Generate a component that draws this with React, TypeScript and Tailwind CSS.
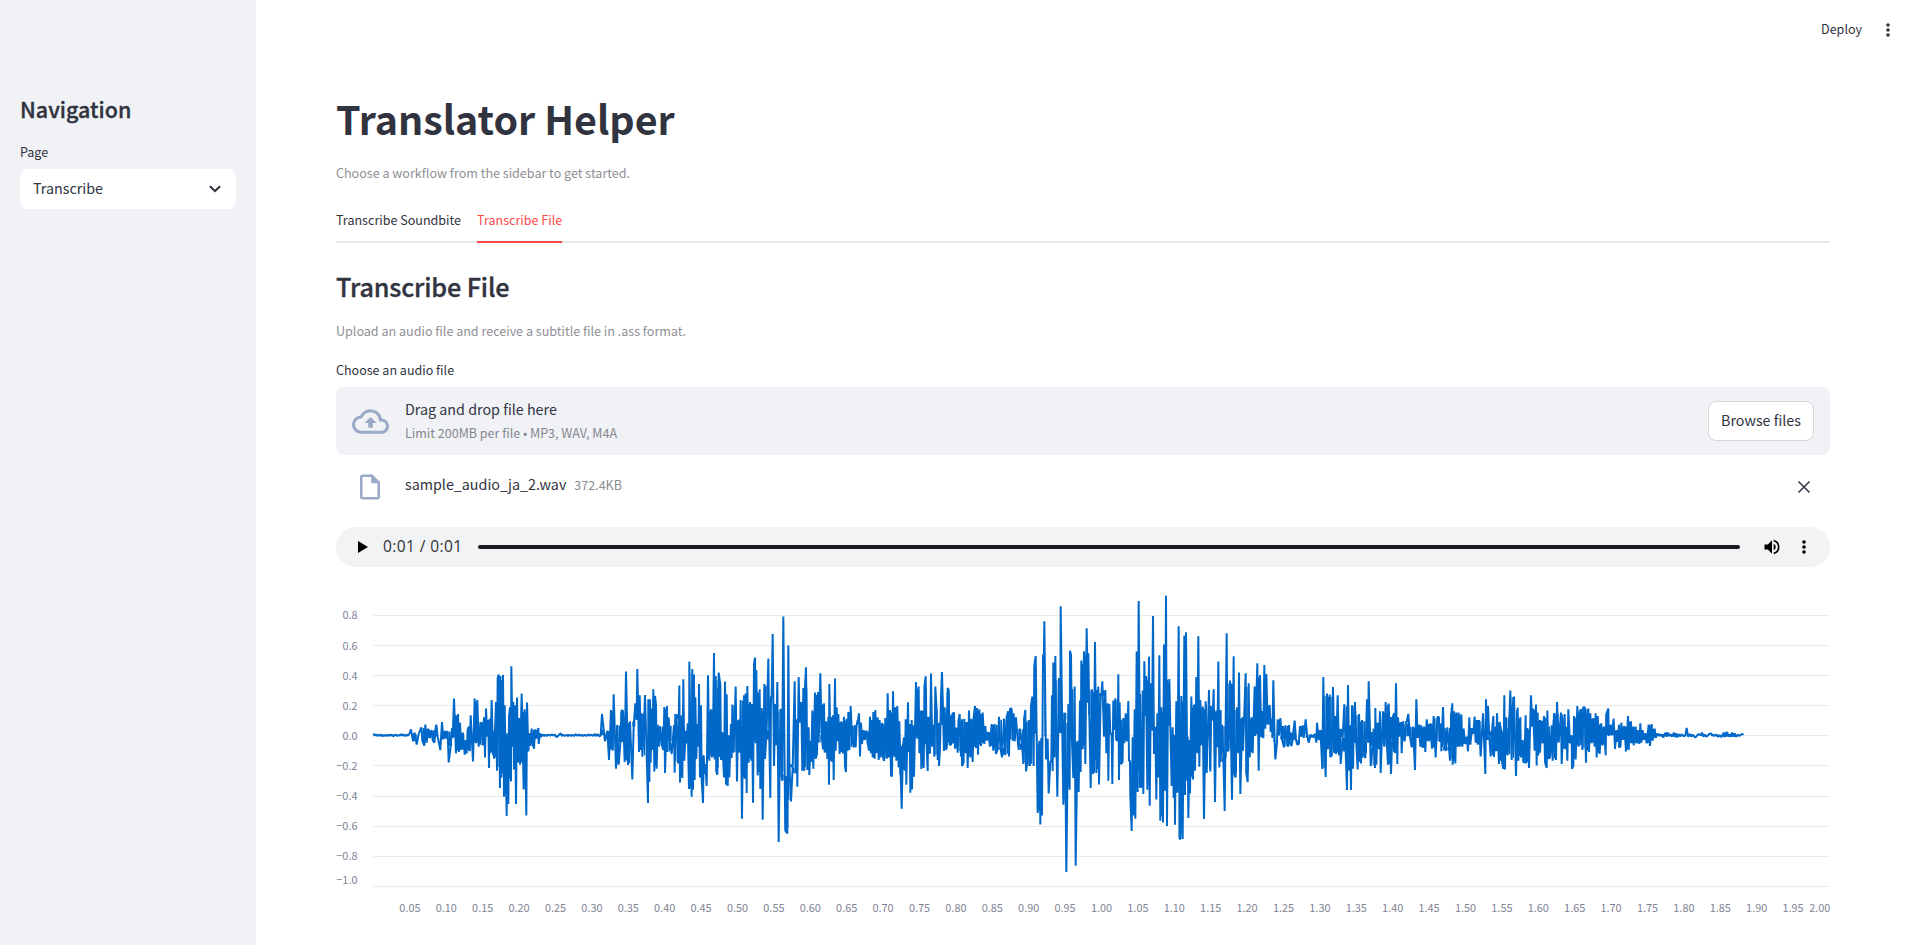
import React from "react";

type Segment = { offset: number; points: string };

// Samples are stored in thirds of a pixel, one list per stretch of the recording.
const segments: Segment[] = [
  {
    offset: -48,
    points:
      "160,461 164,467 168,463 172,468 176,464 180,467 184,464 188,469 192,465 196,468 200,464 204,468 208,464 212,467 216,464 220,469 224,465 228,464 232,468 236,465 240,467 244,462 248,467 252,464 256,468 260,464 264,467 268,462 273,448 279,484 284,458 290,494 296,462 304,442 308,484 313,497 316,434 320,488 325,446 330,474 335,450 339,482 343,488 346,450 349,434 353,470 361,510 366,426 370,478 375,453 380,476 383,453 386,545 392,500 396,444 398,474 402,358 408,520 414,404 417,516 420,428 424,510 429,458 434,524 438,480 440,520 444,446 447,440 449,514 452,406 459,542 464,358 468,490 472,362 476,500 479,450 484,426 488,496 492,412 495,530 498,388 502,470 505,420 507,562 509,416 511,520 515,362 519,526 523,452 522,534 528,368 531,570 533,296 536,286 540,622 541,290 544,590 549,287 552,648 554,378 560,706 562,460 565,670 567,410 570,384 573,602 574,261 578,500 580,368 582,566 585,378 588,670 591,355 594,545 597,414 600,552 605,343 611,626 614,390 619,704 621,370 625,514 629,460 631,498 635,446 638,492 642,506 645,448 649,476 655,444 656,492 660,460 664,470 668,463 672,468 676,464 680,468 684,464 690,467 696,463 700,467 705,464 710,472 716,466 722,460 726,468 730,464 735,468 740,464 744,468 748,464 753,468 757,464 762,468 767,463 772,467 777,463 781,468 785,464 790,468 795,464 800,468 805,463 810,467 815,464 820,468 824,462 829,468 833,462 838,469 842,466 846,404 851,448 855,484 862,452 867,538 873,392 878,512 881,345 888,564 892,434 896,552 901,490 905,392 909,396 914,544 918,277 924,553 930,424 937,596 941,440 946,372 950,420 952,269 957,516 959,348 963,510 965,402 967,528 972,440 975,347 984,667 985,360 988,604 990,360 992,546 995,388 997,510 1000,330 1003,572 1005,350 1008,376 1010,564 1013,434 1017,500 1021,438 1026,498 1030,510 1033,383 1035,577 1041,380 1042,516 1046,412 1050,485 1055,522 1062,435 1064,576 1066,404 1069,418 1074,548 1078,319 1080,605 1085,406 1087,592 1090,300 1093,540 1097,452 1101,490 1103,430 1107,625 1108,247 1113,568 1115,648 1117,269 1119,627 1122,286 1124,598 1126,354 1129,535 1132,432 1135,500 1137,314 1140,590 1143,378 1145,597 1149,667 1151,526 1154,580 1156,550 1160,616 1164,288 1168,540 1173,390 1176,530 1179,460",
  },
  {
    offset: 792,
    points:
      "342,221 344,536 347,290 349,572 352,582 356,280 361,316 363,538 366,456 372,590 375,307 378,612 380,345 383,616 387,466 388,590 393,432 395,532 397,376 400,518 403,452 407,322 411,602 414,424 417,420 419,518 422,362 426,714 429,440 432,348 434,594 437,342 440,637 442,320 446,546 450,368 454,540 456,374 459,666 462,256 465,235 467,490 469,272 473,584 479,330 481,625 485,386 488,717 493,314 495,535 500,450 505,238 508,480 511,652 513,354 515,350 518,164 522,556 526,374 528,496 532,308 536,784 541,392 543,390 546,600 550,112 554,580 556,750 562,758 565,199 568,550 573,662 578,560 584,306 587,578 590,418 592,618 596,293 599,428 604,368 607,570 610,326 613,570 615,322 618,264 622,568 626,442 628,583 632,482 634,544 637,394 640,564 645,340 647,534 651,522 654,338 656,488 661,282 665,464 669,508 672,372 674,518 678,424 682,535 685,410 687,612 688,314 692,534 697,542 699,406 701,598 705,298 707,512 710,384 713,484 715,404 719,522 724,424 729,520 732,410 735,558 738,574 740,416 743,512 745,398 748,510 752,380 756,474 761,502 764,436 767,502 770,434 774,420 777,402 780,527 783,428 786,492 791,450 794,480 800,452 804,494 807,512 810,410 813,520 815,420 818,530 820,398 824,534 826,392 829,520 833,412 836,538 839,420 842,530 846,428 849,528 852,541 856,414 860,534 863,342 866,530 870,392 873,586 876,586 879,336 883,528 886,384 889,540 892,380 896,560 898,424",
  },
  {
    offset: 1632,
    points:
      "62,582 65,684 69,494 72,472 75,570 77,418 79,612 84,369 86,516 89,432 91,636 95,420 96,626 100,436 102,588 108,308 112,476 116,322 118,520 121,394 124,565 127,394 131,562 134,316 137,291 140,500 143,571 145,410 148,520 150,518 153,283 157,500 160,434 163,528 166,322 170,392 173,538 176,428 177,556 180,504 183,352 186,278 190,438 192,513 194,384 197,508 200,506 203,326 206,332 209,494 213,494 217,404 222,400 225,506 229,443 233,518 236,420 239,404 243,528 246,418 246,556 250,548 253,416 257,520 260,426 263,562 267,394 271,530 274,416 278,544 281,412 285,380 288,504 291,386 294,524 298,390 303,498 308,400 313,492 316,438 319,482 324,456 330,500 335,432 340,512 344,432 348,522 353,508 357,410 361,502 366,530 372,416 376,526 380,412 384,396 387,527 390,390 394,386 398,482 401,402 404,484 408,412 413,480 416,510 420,446 426,490 430,550 433,412 436,392 438,572 443,540 446,420 450,556 453,380 457,352 461,556 463,258 467,230 470,470 473,697 478,482 481,731 484,474 486,704 489,226 491,278 493,126 498,536 503,476 506,638 511,542 514,542 516,348 518,571 520,250 523,530 526,230 529,470 532,648 537,296 541,460 542,81 547,460 550,672 553,400 555,420 559,874 565,374 569,627 570,214 573,226 576,490 580,592 584,322 587,855 591,580 593,482 596,634 600,364 602,574 604,244 608,508 612,216 616,550 620,147 624,370 625,222 628,408 632,622 636,330 639,580 642,546 645,188 649,577 655,322 657,611 662,342 664,350 667,306 672,470 676,332 679,520 683,372 685,600 688,374 691,460 695,462 697,610 700,364 703,450 706,357 709,480 713,482 715,285 717,598 719,370 722,550 727,546 730,414 733,490 737,402 741,484 745,365 747,540 750,540 751,648 755,751 758,472 760,704 764,390 766,714 770,217 773,634 776,65 780,590 783,622 788,334 790,640 793,246 796,408 798,290 802,627 807,232 809,675 813,312 816,452 819,110 822,522 826,440 829,656 832,402 835,590 838,228 841,720 844,384 849,725 852,196 855,630 858,49 861,736 864,360 868,299 871,440 875,616 878,442 881,652 884,464 885,732 889,366 892,636 896,141 899,775",
  },
  {
    offset: 2472,
    points:
      "61,775 64,350 68,775 73,169 75,643 78,159 82,600 83,470 85,712 89,480 90,638 94,352 99,596 102,376 105,570 109,293 112,520 115,171 118,558 121,362 125,496 128,382 132,715 137,366 140,577 147,332 151,572 154,380 157,422 161,330 165,664 169,394 172,502 175,247 178,560 182,392 182,544 186,434 190,530 194,691 200,162 202,514 206,510 210,304 216,657 221,231 223,578 227,590 231,384 235,520 237,280 241,640 247,412 249,512 257,282 259,578 263,604 266,312 269,530 275,412 278,520 284,322 286,468 292,252 296,570 300,287 304,472 308,395 310,475 313,257 316,446 319,284 323,434 329,377 332,456 336,416 337,474 340,303 344,486 346,536 351,488 353,418 357,466 361,414 366,478 372,502 376,436 380,474 384,500 387,435 389,486 395,498 400,456 404,422 408,480 412,494 416,492 420,438 424,470 428,436 431,474 437,418 441,462 446,488 452,464 458,472 464,462 469,488 471,428 476,480 481,450 483,486 487,565 490,293 493,496 497,589 501,343 504,508 509,346 511,529 515,526 519,323 523,520 526,408 528,522 533,348 537,526 540,446 542,550 548,472 553,375 557,516 561,628 564,317 568,570 570,436 573,628 576,378 579,564 581,440 585,368 589,490 593,566 597,404 603,548 606,420 610,520 616,532 621,360 624,488 626,306 630,454 632,556 638,500 641,446 645,562 646,386 649,552 653,428 656,508 660,396 662,577 669,396 673,500 677,368 680,480 684,552 686,373 690,480 693,580 699,408 703,402 705,520 708,312 712,550 714,412 718,470 723,426 725,520 729,424 734,484 739,430 745,404 750,470 755,502 759,440 765,568 769,360 773,474 777,434 781,500 784,436 788,504 792,440 796,516 800,418 806,484 811,430 816,506 821,408 827,530 832,412 836,410 840,486 844,430 844,514 849,383 853,504 858,512 862,442 867,500 870,540 874,400 877,372 878,552 882,396 886,548 889,400 893,500 896,400 899,500",
  },
  {
    offset: 3312,
    points:
      "64,405 67,500 71,446 75,492 80,470 84,514 88,412 91,494 96,444 100,462 104,410 107,488 111,420 113,494 117,420 122,527 129,402 136,580 138,360 141,480 144,380 148,470 152,527 156,454 160,408 162,529 166,440 168,514 171,402 174,480 177,550 179,426 183,450 186,544 190,564 193,348 195,566 198,412 203,526 207,440 211,334 215,538 218,380 222,352 228,586 233,385 235,540 241,412 243,530 248,480 250,544 253,546 257,406 258,548 262,444 267,562 273,348 277,440 279,388 284,512 288,376 290,554 293,400 295,526 300,420 300,518 305,422 308,490 312,408 315,544 320,562 322,394 326,534 330,530 335,436 338,540 342,402 346,420 348,538 351,368 356,488 363,400 365,550 369,456 374,404 376,508 379,440 382,540 385,390 390,490 395,466 396,564 400,556 402,408 407,536 412,380 416,500 419,402 423,390 427,510 430,384 434,384 438,546 440,410 445,388 447,516 451,402 455,490 460,414 464,500 467,402 470,530 473,408 479,522 484,430 487,496 492,440 497,526 499,404 505,388 506,468 512,434 515,466 521,416 525,507 530,450 533,486 537,434 537,502 541,500 544,428 548,480 553,438 558,514 564,408 566,510 570,440 573,424 575,490 580,440 581,496 587,440 590,490 595,450 598,492 601,430 604,488 608,450 611,480 616,460 620,490 626,434 630,498 635,432 638,482 644,446 647,474 652,460 656,468 660,462 664,469 667,463 670,473 674,462 678,458 681,470 684,458 688,468 692,463 696,470 702,458 705,471 708,460 712,472 716,462 720,469 726,463 731,469 736,466 740,444 744,470 750,462 754,470 758,464 766,473 772,466 776,462 782,466 786,458 790,470 794,464 800,470 804,466 808,462 813,460 817,467 820,464 824,468 829,463 834,471 838,465 844,471 848,464 852,458 855,471 858,459 862,457 865,470 868,464 872,470 876,458 880,470 884,460 888,471 892,464 898,468 904,463 911,463",
  },
];

const MIDLINE = 466 / 3;

const samples = segments.flatMap(({ offset, points }) =>
  points.split(" ").map((pair) => {
    const [px, py] = pair.split(",").map(Number);
    const y = py / 3;
    const tip = Math.abs(y - MIDLINE) > 20 ? Math.sign(y - MIDLINE) * 0.7 : 0;
    return { x: (px + offset) / 3, y: y + tip };
  }),
);

const waveform = samples.map(({ x, y }) => `${x.toFixed(2)},${y.toFixed(2)}`).join(" ");

// Solid core of the signal: the range every group of neighbouring peaks has in common.
const core = samples
  .slice(1, -2)
  .map((a, i) => {
    const b = samples[i + 2];
    const ys = [samples[i].y, a.y, b.y, samples[i + 3].y].sort((m, n) => m - n);
    const pad = (ys[2] - ys[1]) * 0.04;
    if (b.x - a.x > 2.2 || b.x <= a.x || ys[2] - ys[1] < 2) return "";
    return `M${a.x.toFixed(2)} ${(ys[1] + pad).toFixed(2)}H${b.x.toFixed(2)}V${(ys[2] - pad).toFixed(2)}H${a.x.toFixed(2)}Z`;
  })
  .join("");

const yTicks = [
  { label: "0.8", line: 35.5, text: 35 },
  { label: "0.6", line: 65.5, text: 66 },
  { label: "0.4", line: 95.5, text: 96 },
  { label: "0.2", line: 125.5, text: 126 },
  { label: "0.0", line: 155.5, text: 156 },
  { label: "−0.2", line: 185.5, text: 186 },
  { label: "−0.4", line: 216.5, text: 216 },
  { label: "−0.6", line: 246.5, text: 246 },
  { label: "−0.8", line: 276.5, text: 276 },
  { label: "−1.0", line: 306.5, text: 300 },
];

const xTicks = Array.from({ length: 39 }, (_, i) => ({
  label: ((i + 1) * 0.05).toFixed(2),
  x: 37.5 + (i + 1) * 36.4,
}));

function Dots({ className }: { className: string }) {
  return (
    <svg viewBox="0 0 16 16" className={className} fill="currentColor">
      <circle cx="8" cy="3" r="1.8" />
      <circle cx="8" cy="8" r="1.8" />
      <circle cx="8" cy="13" r="1.8" />
    </svg>
  );
}

function Sidebar() {
  return (
    <aside className="flex w-64 shrink-0 flex-col bg-[#f0f2f6] px-5 pt-[93px]">
      <h2 className="flex h-8 items-center text-[21.5px] font-medium [-webkit-text-stroke:0.35px_#31333f]">
        Navigation
      </h2>
      <label className="mt-[17px] flex h-5 items-center text-[12.53px]">Page</label>
      <div className="mt-[7px] flex h-10 items-center justify-between rounded-lg bg-white pr-[15px] pl-[13px] text-[14.3px]">
        <span className="pb-0.5">Transcribe</span>
        <svg viewBox="0 0 12 12" className="size-3" fill="none" stroke="currentColor" strokeWidth="2">
          <path d="M1.5 3.7 6 8l4.5-4.3" strokeLinecap="round" />
        </svg>
      </div>
    </aside>
  );
}

function Uploader() {
  return (
    <>
      <section className="mt-[7px] flex h-[68px] shrink-0 items-center rounded-lg bg-[#f0f2f6] px-4">
        <svg viewBox="0 0 24 24" className="size-[37px] text-[#9aa9c8]" fill="currentColor">
          <path d="M19.35 10.04A7.49 7.49 0 0 0 12 4C9.11 4 6.6 5.64 5.35 8.04A5.994 5.994 0 0 0 0 14c0 3.31 2.69 6 6 6h13c2.76 0 5-2.24 5-5 0-2.64-2.05-4.78-4.65-4.96zM19 18H6c-2.21 0-4-1.79-4-4 0-2.05 1.53-3.76 3.56-3.97l1.07-.11.5-.95A5.469 5.469 0 0 1 12 6c2.62 0 4.88 1.86 5.39 4.43l.3 1.5 1.53.11A2.98 2.98 0 0 1 22 15c0 1.65-1.35 3-3 3zM8 13h2.55v3h2.9v-3H16l-4-4z" />
        </svg>
        <div className="ml-4 flex flex-1 flex-col">
          <span className="flex h-6 items-center pb-0.5 text-[14.3px]">Drag and drop file here</span>
          <span className="flex h-[22px] items-center text-[12.53px] text-[#858790]">
            Limit 200MB per file • MP3, WAV, M4A
          </span>
        </div>
        <button className="flex h-10 w-[106px] items-center justify-center rounded-lg border border-[#d6d6d8] bg-white pb-0.5 text-[14.3px]">
          Browse files
        </button>
      </section>
      <div className="flex h-[72px] shrink-0 items-center pr-[19px] pl-[19px]">
        <svg viewBox="0 0 24 24" className="mt-[-8px] size-[30px] text-[#9aa9c8]" fill="currentColor">
          <path d="M6 2c-1.1 0-1.99.9-1.99 2L4 20c0 1.1.89 2 1.99 2H18c1.1 0 2-.9 2-2V8l-6-6H6zm0 18V4h7v5h5v11H6z" />
        </svg>
        <span className="mt-[-14px] ml-5 text-[14.3px]">sample_audio_ja_2.wav</span>
        <span className="mt-[-11px] ml-2 flex-1 text-[12.53px] text-[#8a8b92]">372.4KB</span>
        <svg viewBox="0 0 14 14" className="mt-[-8px] size-[14px]" fill="none" stroke="currentColor" strokeWidth="1.5">
          <path d="M1.5 1.5l11 11M12.5 1.5l-11 11" />
        </svg>
      </div>
    </>
  );
}

function AudioPlayer() {
  return (
    <div className="flex h-10 shrink-0 items-center rounded-full bg-[#f1f3f4] pr-[18px] pl-[22px] text-black">
      <svg viewBox="0 0 10 12" className="h-3 w-2.5" fill="currentColor">
        <path d="M0 0v12l10-6z" />
      </svg>
      <span className="ml-[15px] w-[95px] font-['Open_Sans',sans-serif] text-[15.5px] tracking-[0.4px] whitespace-nowrap text-[#303134]">
        0:01 / 0:01
      </span>
      <div className="h-1 flex-1 rounded-full bg-[#1a1a1e]" />
      <svg viewBox="0 0 24 24" className="ml-[22px] size-5" fill="currentColor">
        <path d="M3 9v6h4l5 5V4L7 9H3zm13.5 3A4.5 4.5 0 0 0 14 7.97v8.05A4.5 4.5 0 0 0 16.5 12zM14 3.23v2.06a7.003 7.003 0 0 1 0 13.42v2.06a9 9 0 0 0 0-17.54z" />
      </svg>
      <Dots className="ml-[14px] size-4" />
    </div>
  );
}

function WaveformChart() {
  return (
    <svg className="mt-[13px] h-[350px] w-full shrink-0 overflow-visible" viewBox="0 0 1494 350">
      {yTicks.map(({ label, line, text }) => (
        <g key={label}>
          <path d={`M37.5 ${line}H1493.5`} stroke="#e6eaf1" fill="none" />
          <text x="21.5" y={text + 4} textAnchor="end" fontSize="10.9" fill="#808495">
            {label}
          </text>
        </g>
      ))}
      {xTicks.map(({ label, x }) => (
        <text key={label} x={x} y="332.3" textAnchor="middle" fontSize="10.9" fill="#808495">
          {label}
        </text>
      ))}
      <text x="1494.3" y="332.3" textAnchor="end" fontSize="10.9" fill="#808495">
        2.00
      </text>
      <path d={core} fill="#0068c9" />
      <polyline points={waveform} fill="none" stroke="#0068c9" strokeWidth="2" strokeLinejoin="bevel" />
    </svg>
  );
}

export default function App() {
  return (
    <div className="relative flex h-[945px] overflow-hidden bg-white font-['Noto_Sans_CJK_JP',sans-serif] text-[#31333f]">
      <Sidebar />
      <main className="flex min-w-0 flex-1 flex-col pr-[90px] pl-20">
        <h1 className="mt-[91px] flex h-[53px] shrink-0 items-center text-[39.4px] font-bold">Translator Helper</h1>
        <p className="mt-[19px] flex h-[21px] shrink-0 items-center text-[12.55px] text-[#8f9096]">
          Choose a workflow from the sidebar to get started.
        </p>
        <nav className="mt-4 flex h-[43px] shrink-0 gap-4 border-b-2 border-[#e8e8ea] text-[12.55px]">
          <span className="flex h-[43px] items-center pb-0.5">Transcribe Soundbite</span>
          <span className="flex h-[43px] items-center border-b-2 border-[#ff4b4b] text-[#ff4b4b]">Transcribe File</span>
        </nav>
        <h2 className="mt-[25px] flex h-[38px] shrink-0 items-center text-[25.2px] font-medium tracking-[-0.15px] [-webkit-text-stroke:0.35px_#31333f]">
          Transcribe File
        </h2>
        <p className="mt-[15px] flex h-[21px] shrink-0 items-center text-[12.55px] text-[#8f9096]">
          Upload an audio file and receive a subtitle file in .ass format.
        </p>
        <label className="mt-[18px] flex h-5 shrink-0 items-center text-[12.53px]">Choose an audio file</label>
        <Uploader />
        <AudioPlayer />
        <WaveformChart />
      </main>
      <header className="absolute top-0 right-0 flex h-[60px] items-center gap-[18px] pr-6 text-[12.53px]">
        <span className="pb-0.5">Deploy</span>
        <Dots className="size-4" />
      </header>
    </div>
  );
}
